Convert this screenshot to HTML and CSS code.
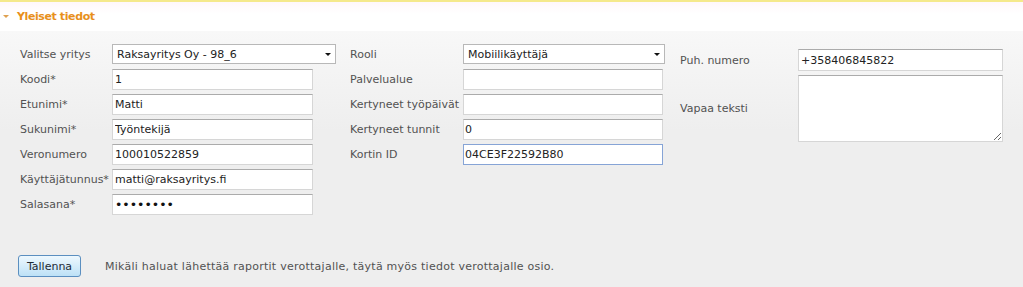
FILE: index.html
```html
<!DOCTYPE html>
<html lang="fi">
<head>
    <meta charset="UTF-8">
    <title>Yleiset tiedot</title>
    <link rel="stylesheet" href="styles.css">
</head>
<body>
    <div class="panel">
        <div class="panel-head">
            <span class="caret"></span>
            <h2>Yleiset tiedot</h2>
        </div>

        <div class="panel-body">
            <div class="form-cols">
                <!-- perustiedot -->
                <div class="col col-a">
                    <label>Valitse yritys</label>
                    <div class="select-wrap"><select><option>Raksayritys Oy - 98_6</option></select></div>
                    <label>Koodi*</label>
                    <input type="text" value="1">
                    <label>Etunimi*</label>
                    <input type="text" value="Matti">
                    <label>Sukunimi*</label>
                    <input type="text" value="Työntekijä">
                    <label>Veronumero</label>
                    <input type="text" value="100010522859">
                    <label>Käyttäjätunnus*</label>
                    <input type="text" value="matti@raksayritys.fi">
                    <label>Salasana*</label>
                    <input type="password" value="salasana">
                </div>

                <!-- rooli ja kertymat -->
                <div class="col col-b">
                    <label>Rooli</label>
                    <div class="select-wrap"><select><option>Mobiilikäyttäjä</option></select></div>
                    <label>Palvelualue</label>
                    <input type="text" value="">
                    <label>Kertyneet työpäivät</label>
                    <input type="text" value="">
                    <label>Kertyneet tunnit</label>
                    <input type="text" value="0">
                    <label>Kortin ID</label>
                    <input type="text" class="focused" value="04CE3F22592B80">
                </div>

                <!-- yhteystiedot -->
                <div class="col col-c">
                    <label>Puh. numero</label>
                    <input type="text" value="+358406845822">
                    <label>Vapaa teksti</label>
                    <textarea></textarea>
                </div>
            </div>

            <div class="actions">
                <button type="button">Tallenna</button>
                <span class="hint">Mikäli haluat lähettää raportit verottajalle, täytä myös tiedot verottajalle osio.</span>
            </div>
        </div>
    </div>
</body>
</html>
```

FILE: styles.css
```css
body {
    margin: 0;
    font-family: "DejaVu Sans", Verdana, sans-serif;
    font-size: 11px;
    color: #525252;
    background: #eeeeee;
}

.panel-head {
    height: 29px;
    border-top: 2px solid #f5e98c;
    background: linear-gradient(#fff7fb 0, #ffffff 12px);
    display: flex;
    align-items: center;
    padding-left: 3px;
}

.caret {
    width: 0;
    height: 0;
    border-left: 3px solid transparent;
    border-right: 3px solid transparent;
    border-top: 3px solid #e0a050;
    margin-right: 8px;
}

.panel-head h2 {
    margin: 0;
    font-size: 11px;
    font-weight: bold;
    letter-spacing: -0.4px;
    color: #e8901c;
}

.panel-body {
    height: 256px;
    box-sizing: border-box;
    padding: 13px 0 0 20px;
    background: linear-gradient(#f8f8f8 0, #eeeeee 100px);
}

.form-cols {
    display: flex;
    align-items: flex-start;
}

.col {
    display: grid;
    grid-auto-rows: 21px;
    row-gap: 4px;
    align-items: center;
}

.col-a {
    width: 330px;
    grid-template-columns: 92px 224px;
}

.col-b {
    width: 330px;
    grid-template-columns: 113px 202px;
}

.col-c {
    margin-top: 5px;
    grid-template-columns: 118px 205px;
    grid-template-rows: 22px 67px;
}

label {
    white-space: nowrap;
}

input, textarea, select {
    font-family: "DejaVu Sans", Verdana, sans-serif;
    font-size: 11px;
    color: #222;
    box-sizing: border-box;
    background: #fff;
    border: 1px solid #d6d6d6;
    border-top-color: #ababab;
    margin: 0;
    outline: none;
}

input {
    height: 21px;
    width: 201px;
    padding: 0 2px;
}

input[type="password"] {
    font-size: 12.5px;
    color: #111;
}

.col-b input {
    width: 200px;
    padding: 0 1px;
}

.col-c input {
    width: 205px;
    height: 22px;
}

input.focused {
    border-color: #86a4d6;
}

textarea {
    width: 205px;
    height: 67px;
}

.select-wrap {
    position: relative;
    height: 20px;
    align-self: start;
}

.select-wrap select {
    appearance: none;
    width: 100%;
    height: 20px;
    padding: 0 4px;
    border: 1px solid #b8b8b8;
    border-radius: 0;
}

.select-wrap::after {
    content: "";
    position: absolute;
    right: 5px;
    top: 9px;
    border-left: 3px solid transparent;
    border-right: 3px solid transparent;
    border-top: 3px solid #111;
}

.actions {
    display: flex;
    align-items: center;
    margin: 40px 0 0 -2px;
}

.actions button {
    width: 63px;
    height: 22px;
    font-family: "DejaVu Sans", Verdana, sans-serif;
    font-size: 11px;
    color: #1e2a36;
    border: 1px solid #5b8fc0;
    border-radius: 3px;
    background: linear-gradient(#eef8fe, #bde1f6);
    padding: 0;
}

.hint {
    margin-left: 24px;
    letter-spacing: 0.25px;
}
```
